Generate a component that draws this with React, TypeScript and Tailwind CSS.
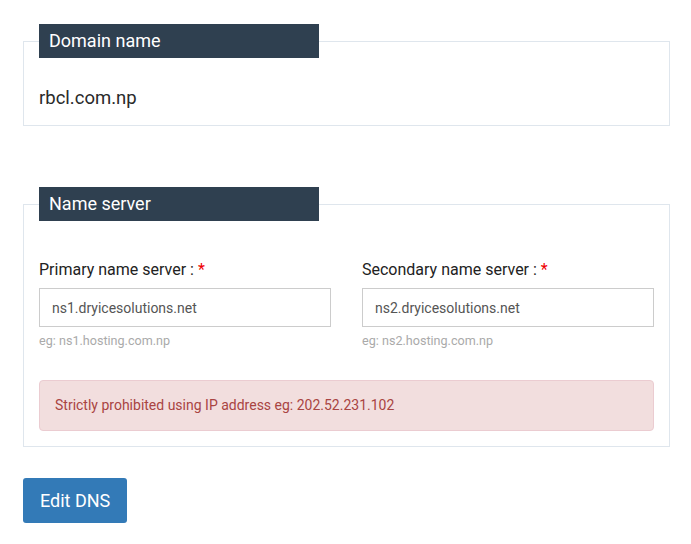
import React from "react";

const font = { fontFamily: "Roboto, 'Liberation Sans', sans-serif" };

function Panel({ title, children }: { title: string; children: React.ReactNode }) {
  return (
    <fieldset className="border border-[#dfe6ed] px-[15px] pb-[15px]">
      <legend className="w-[280px] h-[34px] bg-[#2f4050] pl-[10px] text-[18px] leading-[34px] text-white">
        {title}
      </legend>
      {children}
    </fieldset>
  );
}

function NsField({ label, value, hint }: { label: string; value: string; hint: string }) {
  return (
    <div className="flex flex-col">
      <label className="text-[16px] leading-[20px] text-[#222]">
        {label} : <span className="text-[#e00]">*</span>
      </label>
      <input
        readOnly
        value={value}
        className="mt-[8px] h-[39px] border border-[#ccc] px-[12px] text-[14px] text-[#555] outline-none"
      />
      <span className="mt-[6px] text-[12.6px] leading-[16px] text-[#aaa]">{hint}</span>
    </div>
  );
}

export default function App() {
  return (
    <div className="min-h-[544px] bg-white px-[23px] pt-[24px] pr-[21px]" style={font}>
      <Panel title="Domain name">
        <div className="pt-[28px] text-[18.5px] leading-[24px] text-[#2a2a2a]">rbcl.com.np</div>
      </Panel>

      <div className="mt-[61px]">
        <Panel title="Name server">
          <div className="pt-[39px] grid grid-cols-2 gap-x-[31px]">
            <NsField label="Primary name server" value="ns1.dryicesolutions.net" hint="eg: ns1.hosting.com.np" />
            <NsField label="Secondary name server" value="ns2.dryicesolutions.net" hint="eg: ns2.hosting.com.np" />
          </div>
          <div className="mt-[31px] h-[51px] flex items-center rounded-[4px] border border-[#ebccd1] bg-[#f2dede] px-[15px] text-[14px] text-[#a94442]">
            Strictly prohibited using IP address eg: 202.52.231.102
          </div>
        </Panel>
      </div>

      <button className="mt-[31px] h-[45px] rounded-[3px] bg-[#337ab7] px-[17px] text-[18px] text-white">
        Edit DNS
      </button>
    </div>
  );
}
